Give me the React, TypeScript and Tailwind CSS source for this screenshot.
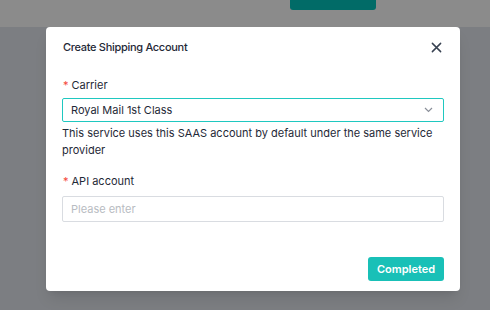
import React from 'react';

export default function App() {
  return (
    <div className="relative h-[310px] w-[490px] overflow-hidden bg-[#7c7e82] font-['Inter',sans-serif]">
      {/* page behind the overlay */}
      <div className="h-[27px] bg-[#8b8b8b]">
        <div className="ml-[290px] h-[10px] w-[86px] rounded-b-[3px] bg-[#016b67]" />
      </div>

      {/* modal */}
      <div className="absolute left-[46px] top-[27px] flex h-[264px] w-[414px] flex-col rounded-[4px] bg-white px-4 shadow-lg">
        <div className="mt-[10px] flex h-[20px] items-center justify-between pl-[1px]">
          <h2 className="text-[11px] font-medium tracking-[-0.3px] text-[#1f2937]">Create Shipping Account</h2>
          <svg width="11" height="11" viewBox="0 0 12 12" className="mr-[2px] text-[#374151]">
            <path d="M1.5 1.5 L10.5 10.5 M10.5 1.5 L1.5 10.5" stroke="currentColor" strokeWidth="1.6" strokeLinecap="round" />
          </svg>
        </div>

        <label className="mt-[18px] flex h-[20px] items-center pl-[1px] text-[11px] text-[#1f2937]">
          <span className="mr-[3px] text-[#f5483b]">*</span>Carrier
        </label>
        <div className="mt-[3px] flex h-[24px] items-center justify-between rounded-[2px] border border-[#1fc8c0] pl-[8px] pr-[10px]">
          <span className="text-[11px] text-[#1f2937]">Royal Mail 1st Class</span>
          <svg width="9" height="6" viewBox="0 0 9 6" className="text-[#8a8f99]">
            <path d="M1 1 L4.5 4.5 L8 1" fill="none" stroke="currentColor" strokeWidth="1.2" />
          </svg>
        </div>
        <p className="mt-[3px] text-[11px] leading-[17px] text-[#1f2937]">
          This service uses this SAAS account by default under the same service provider
        </p>

        <label className="mt-[12px] flex h-[20px] items-center pl-[1px] text-[11px] text-[#1f2937]">
          <span className="mr-[3px] text-[#f5483b]">*</span>API account
        </label>
        <div className="mt-[5px] flex h-[26px] items-center rounded-[2px] border border-[#d9dce1] pl-[8px]">
          <span className="text-[11px] text-[#b8bcc2]">Please enter</span>
        </div>

        <div className="mt-[35px] flex justify-end">
          <button className="h-[24px] w-[76px] rounded-[3px] bg-[#19c0b7] text-[11px] font-semibold text-white">
            Completed
          </button>
        </div>
      </div>
    </div>
  );
}
